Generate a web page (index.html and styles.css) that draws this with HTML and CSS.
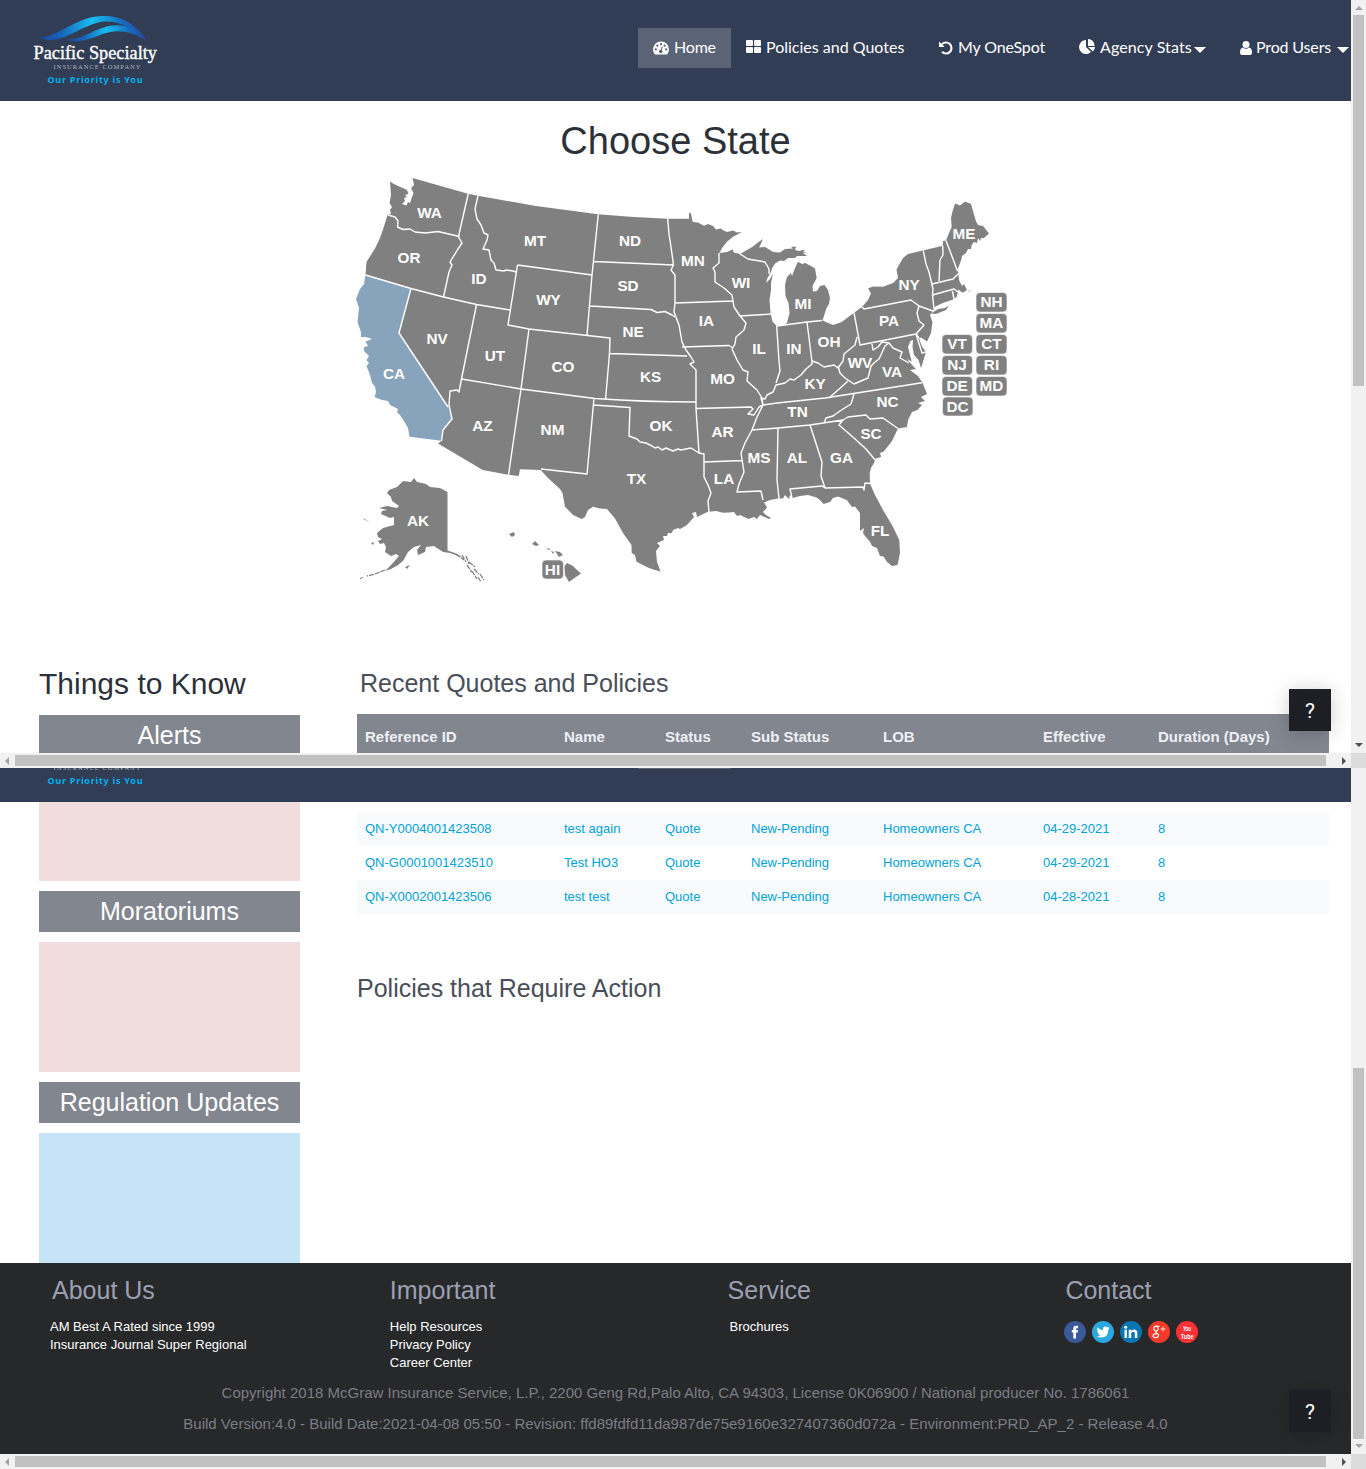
FILE: index.html
```html
<!DOCTYPE html>
<html lang="en">
<head>
<meta charset="utf-8">
<title>Pacific Specialty</title>
<link rel="stylesheet" href="styles.css">
</head>
<body>
<svg width="0" height="0" class="defs" aria-hidden="true">
  <defs>
    <linearGradient id="wave"><stop offset="0" stop-color="#1c439d"/><stop offset=".22" stop-color="#1763bb"/><stop offset=".5" stop-color="#18bdf0"/><stop offset=".78" stop-color="#176bbd"/><stop offset="1" stop-color="#2948a6"/></linearGradient>
    <symbol id="logo" viewBox="30 12 132 76">
      <path fill="url(#wave)" d="M37 37.500C56 39 75 17 101 16C124 15 137 26 147 41C134 29 121 21.500 106 21.500C84 22.500 67 42 47 39.700Q41 39 37 37.500Z"/>
      <path fill="url(#wave)" d="M66 39.500C83 41 97 25 118 25.200C134 26 140 33 147 41C136 34 127 31.300 117 31.300C100 31.300 86 46 66 39.500Z"/>
      <text x="33.500" y="59" textLength="123.500" lengthAdjust="spacingAndGlyphs" class="logo-name">Pacific Specialty</text>
      <text x="53.500" y="68.700" textLength="87" class="logo-sub">INSURANCE COMPANY</text>
      <text x="47.500" y="82.500" textLength="95" class="logo-tag">Our Priority is You</text>
    </symbol>
  </defs>
</svg>

<section class="frame frame-top">
  <div class="page">
    <header class="topbar">
      <svg class="logo" width="132" height="76"><use href="#logo"/></svg>
      <nav class="nav">
        <a class="item home active"><svg width="16" height="14" viewBox="0 0 17 14"><path fill="#fff" d="M2 14Q0 11 0 8.500A8.500 8.500 0 0 1 17 8.500Q17 11 15 14Z"/><g fill="#5b6477"><circle cx="3" cy="8.500" r="1.200"/><circle cx="4.600" cy="4.600" r="1.200"/><circle cx="8.500" cy="3" r="1.200"/><circle cx="12.400" cy="4.600" r="1.200"/><circle cx="14" cy="8.500" r="1.200"/><circle cx="8.200" cy="10.800" r="1.900"/></g><path stroke="#5b6477" stroke-width="1.100" d="M8.200 11L9.800 5.500"/></svg><span>Home</span></a>
        <a class="item policies"><svg width="15" height="13" viewBox="0 0 15 13"><g fill="#fff"><rect width="7" height="6" rx="1"/><rect x="8" width="7" height="6" rx="1"/><rect y="7" width="7" height="6" rx="1"/><rect x="8" y="7" width="7" height="6" rx="1"/></g></svg><span>Policies and Quotes</span></a>
        <a class="item onespot"><svg width="14" height="14" viewBox="0 0 14 14"><path fill="none" stroke="#fff" stroke-width="2.200" d="M3 3.200A5.500 5.500 0 1 1 3 10.800"/><path fill="#fff" d="M0 .5V6H5.700Z"/></svg><span>My OneSpot</span></a>
        <a class="item stats"><svg width="16" height="15" viewBox="0 0 16 15"><path fill="#fff" d="M7 1V8L12 13A7 7 0 1 1 7 1ZM9 0A6.500 6.500 0 0 1 15.500 7H9ZM9 8H16A7 7 0 0 1 14 12.500Z"/></svg><span>Agency Stats</span><i class="caret"></i></a>
        <a class="item users"><svg width="12" height="14" viewBox="0 0 12 14"><circle cx="6" cy="3.500" r="3.500" fill="#fff"/><path fill="#fff" d="M3 6.500Q6 9 9 6.500Q12 7 12 11.500Q12 14 10 14H2Q0 14 0 11.500Q0 7 3 6.500Z"/></svg><span>Prod Users</span><i class="caret"></i></a>
      </nav>
    </header>
    <h1>Choose State</h1>
    <svg class="map" width="670" height="420" viewBox="345 170 670 420">
      <path class="land" d="M390 181.500L394 184L398 186L403 188L407 190L408.500 194L405 195L407 197L404 198L405 201L402 204L406.500 205.500L408 202L410 203L412 197L413.500 193L411 188L414 185L412.500 178L468 193.700L478 195.700L536 206L598 214.300Q633 217.500 667.700 218.700H689V212.500L691 213.500L692.700 222L698 222.500L704 225.700L708 224L713 226L716 229.500L721 228.500L723.500 230.500L727 232L733 230.500L737 232.500L742 232L733 236.700L726.700 242L722 248L719.500 253L727 252L732.500 249.500L734 252.500L740 254L747 250L753 246.500L758 242.500L763 239L761 243.500L759 247.500L765 247L770 250L773 252L780 252.500L785 249L793 248.500L791 247L796 246.500L795 250L799 251L805 249.500L803 252L807 253L803 253L807 256L797 256L795 258L788 258L784 261L780 260.500L775 263.500L772.500 267.500L770 274L767.500 278L766 283L770 279L773 273.500L771 283L771 290L769.500 300L770.500 313L772.500 321.500L776.700 326H782L787 323L789.500 313L788.500 303L785.500 296L785 285L787 277L791 273L792 276L795 268L798 261.700L802 264L805 263L811 266L815 268.500L816.700 278L812.500 286L813 291.500L817 291L820 286L824.500 285L828 290L830 298L829 304L826.500 308L822.500 320.500L827 322.500L833 325L841.700 322L854 312.700L862 307L868 300L871 293.500L868 288.500L873 286.500L883 286.700L893 283L898 278L896.500 269.500L903 258L908 254L923 250.500L942.700 245.700L943 241L946 240.500L949 233L951.700 227L951 218L952.500 211.500L955 203.500L960 205.500L965 201.500L971 204L976 221.500L978 225L983 226L989 233.500L984 238L981 238L980 241L978 238L977 243L974 242L971.700 245L971 249L968 249L966 253L962 256L961.700 258.500L957.500 270L958.500 275L959 280L962 286L964 284L967 290L962.500 292.700L958.500 289.500L956.700 297L953 299.500L943.500 302.700L935 306.700L933 311L930 315L932.500 322L931 333L927 341.500L921 337.500L919 338.500L922 346.500L926 352L923.500 360L921 368L918.500 360L914 355L912.500 347L913 340L910.500 341L908 346.700L910 355L911.700 361.500L907 359L913 366L916 369L910 370L918 376L922.500 382.700L927 394L921 397L925 401L918 403L922 405L917.500 410L912 412L908 420L907 427L898 428.500L891.700 441.500L883.500 451.700L880 453L881 457L876 458.500L874 463L871 468L869.700 473L870 483.500L875 495L883 510L892 525L899.300 540L900 553L897.500 565L892 566L887 562L883.500 556.500L880 556L877 548L872 546L870 541.700L865 536L863 533L864 528L860 531L860 525L860 513L855 506.500L852 507L846.700 500L838 496.500L833 498L830 502L823.500 504L820 500L816.500 497.500L808 495L800 496L792.500 498L790 495L789 499L785 495L783 498.500L778 498.500L770 500L764 502.500L767 507.500L763 512L766 515L771 518L769 519L760 515L757 519L754 517L748.500 519L740 515L737 516L734 512L729 512.500L723 512.700L716 511L708 511.700L701 515L697 517L696 512L692 513L694 517L687 525L680 529L678 528L673 530L672 533L668 533L667 536L663 536L664 540L657 543L660 546L656 551L657 562L660.500 571.500L655 570L648.300 567.700L636.500 561.700L635 555L631.700 553L631.500 545L623 533L615 518.500L607 509L600 508.500L593 506.700L588 510L585 517L581.700 519L573 515L565 506.700L562.500 493L560 489L548 478L540.700 470L520 469.300L518.700 476L508 474.700L482.700 470L438 443.500L441.700 440.700L436 436L400 405L390 300L365.500 275L366.500 262L369 258L375 248.500L380 238L383.500 228L387.500 215L391 213.500L390 210L392 207L389.500 203L391 195Z"/>
      <path class="land selected" d="M365.500 275L411 288.500L399 333L448 406L452 419L443 430L441.500 440.700L409.500 436.700L408 428L404 421L400 415L397 412L398 409L390 405L388 401L382 400L374.500 397L376 392L375 386.500L372 383L370 375L366.500 366L369 363L366.500 360L369 356L364 351L364 347L368 346L365.500 341.500L372 339L366 337L361 337L361 332L357.500 322L359 308L356 299L360 289L364 284Z"/>
      <path class="land" d="M931 313.500L938 309L945 308L949 305.500L946 310L936 314ZM968 292L972 288.500L969 292Z"/>
      <path class="land" d="M447.500 492V550.500L455 553L462 557L458 556L450 553L443 552L434 546L426 547L425 552L418 555L417 550L421 545L414 547L408 552L403 561L398 565L391 569L385 571L392 564L399 556L396 554L391 556L385 552L386 547L384 543L380 544L378 541L382 539L378 537L377 533L383 528L394 525L394 517L390 518L381 514L382 511L387 510L379 508L387 506L397 508L399 506L392 501L391 497L387 493L389 490L397 487L403 481L411 482L414 478L417 482L426 484L430 487L440 488ZM405 567L410 565L407 569ZM371 543L374 542L373 545ZM363 518L366 520L365 520.500ZM366 520L370 522L367 521Z"/>
      <path class="islands" d="M385 570L375 574L367 576M363 577.500L360 578.500M456 554L464 560M462 555L466 562M466 556L469 564M469 562L475 567M467 565L472 572M474 569L479 574M472 571L477 579M480 574L484 580M478 577L481 582"/>
      <path class="land" d="M509 534L514 532L515 535L512 537ZM532 544L535 541L539 545L536 546ZM546 548L551 549L549 550ZM551 551L554 552L553 554ZM555 551L560 552L563 555L559 557ZM564.500 566L567 563L573 566L576 569L581 573.500L576 577L569 582L565 575Z"/>
      <path class="border" d="M388 215L395 217L398 221L397.500 227L403 229.500L410 229L415 232L425 233L438 231.500L459.500 236.500M468.300 193.500L459.500 232L458.500 237L462 243L458 249L450 262L452 265L449 272L443.500 297M365.500 275L411 288.500L443.500 297L476.500 304.500L510 310M478 195.700L475 209L477 219L481 225L484 233L488 235L487 240L483 249L489 250L491 260L494 263L496 270L504 271L506 270L513 271L516 272M517.500 265L592 275M598.300 214.300L592 275L587 335M517.500 265L508 325L529 329L610 338L609.500 353L605.500 400M594 261.500L674 265M590 306L651 309.500L657 312.500L665 311.500L672 315L675 317M667.700 218.700L669 234L671 247L673.500 265L671 270L675 275V303L674 312L679 325L682 342L686 350L691 357L694 362L690 364L696 370V402M675 303L733 301M733 301L732 295L724 288L715 282V272L713 268L719 263L719 253M740 254L748 259L765 262L769 269L769 274M733 301L734 307L740 316L746 323L744 330L736 337L735 344L732 349L737 360L743 370L748 372L747 381L757 390L762 398L763 405M740 316L772.500 314M682 347L729 345.500L733 348M609.500 353.500L687 356M411 288.500L399 333L448 407M476.500 304.500L461.500 379L459 392L457 390L450 391L449 405L452 419L443 430L441.500 441M461.500 379L521 389L595 398.500Q645 402 696 402M529 329L521 389L508.500 475M594 398L587 474L541 469M593.500 405L630 407.500L629 436L637 439L640 442L646 443L652 446L655 448L658 447L662 450L666 448L673 451L678 449L681 450L691 448L699 453M696 402V408.500L699 453L704 454V477L708 485L711 493L708 501L709 512M696 408.500L751 407L753 409L748 414L754 415L759 407L763 405M704 462L742 460.500M763 405L761 398L765 399L767 395L773 392L776 385L785 383L790 379L794 380L801 375L806 369L812 364L812 361L818 363L824 367L834 365L838 368L843 361L844 354L855 345L857 337M763 405L777 403L825 398L922 382.700M777 403L763 405L757 417L752 430L745 443L741 453L744 472L739 484L737 492L761 491L763 500M752 430L778 428L810 425L843 420L848 417L866 415L870 419L883 418L898 428.500M776.700 326L779 361L780 371L776 383M776.700 326L807 322L822 320.500M807 322L812 362M854 312.700L860 345L916 334M862 307L864 309L911 300L919 306L917 313L919 321L924 325L916 334L919 338M838 366L840 373L845 378L854 384L861 381L868 378L871 366L875 362L879 359L885 346L889 343L882 342L878 347L873 350L872 344M889 343L893 348L902 352L900 358L909 363M916 334L922 353L926 352M848 381L838 390L829 398M854 394L851 404L840 411L833 416L826 418L824 423M778 428L777 480L779 498.500M810 425L822 462L821 476L825 488L863 487L864 490L865 483L870 483.500M825 488L822 486L790 489L792 498M843 420L839 425L854 438L866 449L876 461M923.300 250.500L926 264L929 272L933 289L932.500 295L934 309M942.700 245.700L943 255L940 260L939 281M932 284L953 279L958 274M946 240.500L957.500 271M932.500 295L954 289L958 292M952 289L954 299M919 306L933 311"/>
      <g class="chip"><rect x="976" y="292.500" width="31" height="19.500" rx="4"/><rect x="976" y="313.500" width="31" height="19.500" rx="4"/><rect x="976" y="334.500" width="31" height="19.500" rx="4"/><rect x="976" y="355.500" width="31" height="19.500" rx="4"/><rect x="976" y="376.500" width="31" height="19.500" rx="4"/><rect x="942" y="334.500" width="30.500" height="19.500" rx="4"/><rect x="942" y="355.500" width="30.500" height="19.500" rx="4"/><rect x="942" y="376.500" width="30.500" height="19.500" rx="4"/><rect x="942.500" y="397" width="30.500" height="19" rx="4"/><rect x="542" y="560" width="21.500" height="19" rx="4"/></g>
      <g class="label">
        <text x="429.500" y="218">WA</text><text x="409" y="263">OR</text><text x="394" y="379">CA</text><text x="437" y="344">NV</text><text x="479" y="284">ID</text><text x="535" y="246">MT</text><text x="548.500" y="305">WY</text><text x="495" y="361">UT</text><text x="563" y="372">CO</text><text x="482.500" y="431">AZ</text><text x="552.500" y="435">NM</text><text x="630" y="246">ND</text><text x="628" y="291">SD</text><text x="633" y="337">NE</text><text x="650.500" y="382">KS</text><text x="661" y="431">OK</text><text x="636.500" y="484">TX</text><text x="693" y="266">MN</text><text x="706.500" y="326">IA</text><text x="722.500" y="384">MO</text><text x="722.500" y="437">AR</text><text x="724" y="484">LA</text><text x="741" y="288">WI</text><text x="759" y="354">IL</text><text x="794" y="354">IN</text><text x="803" y="309">MI</text><text x="829" y="347">OH</text><text x="815" y="389">KY</text><text x="797.500" y="417">TN</text><text x="759" y="463">MS</text><text x="797" y="463">AL</text><text x="841.500" y="463">GA</text><text x="880" y="536">FL</text><text x="871" y="439">SC</text><text x="887.500" y="407">NC</text><text x="892" y="377">VA</text><text x="860" y="368">WV</text><text x="889" y="326">PA</text><text x="909" y="290">NY</text><text x="964" y="239">ME</text><text x="418" y="526">AK</text><text x="552.500" y="575">HI</text><text x="991.500" y="307">NH</text><text x="991.500" y="328">MA</text><text x="991.500" y="349">CT</text><text x="991.500" y="370">RI</text><text x="991.500" y="391">MD</text><text x="957" y="349">VT</text><text x="957" y="370">NJ</text><text x="957" y="391">DE</text><text x="957.500" y="412">DC</text>
      </g>
    </svg>
    <div class="columns upper">
      <aside class="side"><h2>Things to Know</h2><h3 class="bar">Alerts</h3></aside>
      <main class="content"><h3 class="recent">Recent Quotes and Policies</h3>
        <div class="row head"><span>Reference ID</span><span>Name</span><span>Status</span><span>Sub Status</span><span>LOB</span><span>Effective</span><span>Duration (Days)</span></div>
      </main>
    </div>
    <button class="help">?</button>
  </div>
  <div class="vscroll"><i class="up dim"></i><b></b><i class="down"></i></div>
  <div class="hscroll"><i class="left dim"></i><b></b><i class="right"></i></div>
  <div class="corner"></div>
</section>

<section class="frame frame-bottom">
  <div class="page">
    <header class="topbar clipped"><svg class="logo" width="132" height="76"><use href="#logo"/></svg><div class="tab-edge"></div></header>
    <div class="columns lower">
      <aside class="side"><div class="note red short"></div><h3 class="bar">Moratoriums</h3><div class="note red"></div><h3 class="bar">Regulation Updates</h3><div class="note blue"></div></aside>
      <main class="content">
        <div class="row shade"><a>QN-Y0004001423508</a><a>test again</a><a>Quote</a><a>New-Pending</a><a>Homeowners CA</a><a>04-29-2021</a><a>8</a></div>
        <div class="row"><a>QN-G0001001423510</a><a>Test HO3</a><a>Quote</a><a>New-Pending</a><a>Homeowners CA</a><a>04-29-2021</a><a>8</a></div>
        <div class="row shade"><a>QN-X0002001423506</a><a>test test</a><a>Quote</a><a>New-Pending</a><a>Homeowners CA</a><a>04-28-2021</a><a>8</a></div>
        <h3 class="action">Policies that Require Action</h3>
      </main>
    </div>
    <footer class="footer">
      <div class="foot-cols">
        <div class="about"><h3>About Us</h3><a>AM Best A Rated since 1999</a><a>Insurance Journal Super Regional</a></div>
        <div><h3>Important</h3><a>Help Resources</a><a>Privacy Policy</a><a>Career Center</a></div>
        <div class="service"><h3>Service</h3><a>Brochures</a></div>
        <div><h3>Contact</h3>
          <div class="social">
            <svg viewBox="0 0 22 22"><circle cx="11" cy="11" r="11" fill="#3b5998"/><path fill="#fff" d="M9.300 17.500V11.500H7.800V9H9.300V7.500Q9.300 4.700 12 4.700H14V7.200H12.800Q12 7.200 12 8V9H14L13.700 11.500H12V17.500Z"/></svg>
            <svg viewBox="0 0 22 22"><circle cx="11" cy="11" r="11" fill="#2ca8e0"/><path fill="#fff" d="M5.500 6.500Q8 9 11 9Q10.700 5.600 13.500 5.600Q14.800 5.600 15.500 6.500L17.300 5.900L16.500 7.400L17.600 7.200L16.300 8.700Q16.200 16.500 9 16.500Q6.500 16.500 4.700 15.300Q7 15.300 8.300 14.200Q6.300 13.800 6 12.300H7Q5 11.500 5 9.500L6 9.800Q4.500 8.300 5.500 6.500Z"/></svg>
            <svg viewBox="0 0 22 22"><circle cx="11" cy="11" r="11" fill="#0976b4"/><path fill="#fff" d="M4.500 8.800H7V17H4.500ZM8.700 8.800H11.100V10Q12 8.500 14 8.500Q17.300 8.500 17.300 12V17H14.800V12.500Q14.800 10.800 13.200 10.800Q11.200 10.800 11.200 13V17H8.700Z"/><circle cx="5.700" cy="6.300" r="1.500" fill="#fff"/></svg>
            <svg viewBox="0 0 22 22"><circle cx="11" cy="11" r="11" fill="#f43b2a"/><g fill="none" stroke="#fff" stroke-width="1.100"><ellipse cx="8" cy="7.600" rx="2.100" ry="2.500"/><path d="M8 5.200H11.500M9 10Q7 11 8.500 12Q11 13 10.500 14.800Q10 16.700 7.600 16.700Q5 16.700 5 14.800Q5 12.800 8.800 12.600"/><path stroke-width=".8" d="M12.500 8H17.500M15 5.500V10.500"/></g></svg>
            <svg viewBox="0 0 22 22"><circle cx="11" cy="11" r="11" fill="#fc3134"/><text x="7" y="10.300" textLength="8" lengthAdjust="spacingAndGlyphs" class="yt">You</text><text x="4.800" y="17.700" textLength="12.800" lengthAdjust="spacingAndGlyphs" class="yt">Tube</text></svg>
          </div>
        </div>
      </div>
      <p>Copyright 2018 McGraw Insurance Service, L.P., 2200 Geng Rd,Palo Alto, CA 94303, License 0K06900 / National producer No. 1786061</p>
      <p>Build Version:4.0 - Build Date:2021-04-08 05:50 - Revision: ffd89fdfd11da987de75e9160e327407360d072a - Environment:PRD_AP_2 - Release 4.0</p>
    </footer>
    <button class="help">?</button>
  </div>
  <div class="vscroll"><b></b><i class="down dim"></i></div>
  <div class="hscroll"><i class="left dim"></i><b></b><i class="right"></i></div>
  <div class="corner"></div>
</section>
</body>
</html>
```
FILE: styles.css
```css
* { box-sizing: border-box; }
body { margin: 0; width: 1366px; height: 1469px; overflow: hidden; background: #fff; font-family: "Liberation Sans", Arial, sans-serif; }
h1, h2, h3, p { margin: 0; font-weight: 400; }
.defs { position: absolute; }
.frame { display: grid; grid-template-columns: 1351px 15px; }
.frame-top { grid-template-rows: 753px 15px; }
.frame-bottom { grid-template-rows: 686px 15px; }
.page { position: relative; overflow: hidden; min-height: 0; }

.topbar { display: flex; height: 101px; padding: 12px 0 0 30px; background: #313d54; }
.logo { flex: none; }
.logo-name { font: 19px "Liberation Serif", serif; fill: #fff; stroke: #fff; stroke-width: .35px; }
.logo-sub { font: 6.500px "Liberation Serif", serif; fill: #aeb3bd; }
.logo-tag { font: bold 9px "Noto Sans", sans-serif; fill: #00aeef; }
.nav { display: flex; margin: 16px 0 0 476px; height: 40px; }
.item { display: flex; align-items: center; flex: none; gap: 5px; height: 40px; padding: 0 0 0 15px; color: #fff; font: 16px Lato, sans-serif; white-space: nowrap; }
.item svg { flex: none; }
.item span { margin-top: -3px; }
.active { background: #5b6477; }
.home { width: 93px; }
.home span { letter-spacing: -.2px; }
.policies { width: 193px; }
.onespot { width: 140px; }
.onespot span { letter-spacing: -.15px; }
.stats { width: 161px; }
.stats span { letter-spacing: .1px; }
.users { width: 125px; gap: 4px; }
.users span { letter-spacing: -.15px; }
.policies svg, .stats svg { margin-top: -3px; }
.caret { border: solid transparent; border-width: 6px 6px 0; border-top-color: #fff; margin: 3px 0 0 -3px; }
.users .caret { margin-left: 2px; }

h1 { margin-top: 20px; line-height: 40px; font-size: 38px; color: #2c3038; text-align: center; }
.map { display: block; margin: 9px 0 0 345px; }
.land { fill: #808080; }
.selected { fill: #88a4bd; }
.islands { fill: none; stroke: #808080; stroke-width: 1.300px; stroke-dasharray: 5 1; }
.border { fill: none; stroke: #fff; stroke-width: 1.400px; stroke-linejoin: round; }
.chip rect { fill: #808080; stroke: #fff; stroke-width: .6px; }
.label { font-size: 15.300px; font-weight: 700; fill: #fff; text-anchor: middle; }

.columns { display: grid; grid-template-columns: 261px 972px; column-gap: 57px; padding-left: 39px; }
.upper { padding-top: 73px; }
.side h2 { margin: 1px 0 11px; font-size: 30px; line-height: 40px; color: #2c3038; }
.bar { height: 41px; line-height: 41px; font-size: 25px; text-align: center; color: #fff; background: #82868f; }
.recent, .action { font-size: 25px; line-height: 40px; color: #494e59; }
.recent { margin: 0 0 11px 3px; }
.row { display: grid; grid-template-columns: 199px 101px 86px 132px 160px 115px 1fr; height: 34px; padding-left: 8px; font-size: 13px; line-height: 34px; color: #00a3d9; }
.shade { background: #f9fafc; }
.head { height: 46px; line-height: 46px; font-size: 15px; font-weight: 700; color: #eef0f6; background: #82868f; }

.clipped { height: 34px; padding-top: 0; align-items: flex-end; overflow: hidden; }
.clipped .logo { margin-bottom: 13px; }
.tab-edge { align-self: flex-start; width: 93px; height: 1px; margin-left: 476px; background: #5b6477; }
.lower { height: 461px; }
.lower .content { padding-top: 10px; }
.note { height: 130px; margin: 10px 0; background: #f1dddc; }
.short { height: 79px; margin-top: 0; }
.blue { background: #c5e4f5; margin-bottom: 0; }
.action { margin-top: 54px; }

.footer { height: 191px; padding-top: 7px; background: #27282a; }
.foot-cols { display: grid; grid-template-columns: repeat(4, 337.800px); height: 107px; padding-left: 52px; }
.foot-cols h3 { font-size: 25px; line-height: 40px; margin-bottom: 8px; color: #9ba0b1; }
.foot-cols a { display: block; color: #fff; font-size: 13px; line-height: 18px; }
.about a { margin-left: -2px; }
.service a { margin-left: 2px; }
.footer p { font-size: 15px; line-height: 31px; text-align: center; color: #7b7d86; }
.social { display: flex; gap: 5.800px; margin: 11px 0 0 -1px; }
.social svg { width: 22px; height: 22px; }
.yt { font: bold 8px "Liberation Sans", sans-serif; fill: #fff; }

.help { position: absolute; right: 20px; bottom: 22px; width: 42px; height: 42px; padding: 2px 0 0; border: 0; background: #1d1f24; color: #fff; font: 400 21px/40px Roboto, sans-serif; box-shadow: 0 2px 20px rgba(0,0,0,.2); }

.vscroll, .hscroll { display: flex; align-items: center; background: #f1f1f1; }
.vscroll { flex-direction: column; }
.vscroll b { width: 11px; height: 371px; background: #c1c1c1; }
.frame-bottom .vscroll { padding-top: 300px; }
.hscroll b { width: 1311px; height: 11px; margin-left: 6px; background: #c1c1c1; }
.vscroll i, .hscroll i { width: 0; height: 0; border: 4px solid transparent; --arrow: #505050; }
.vscroll .dim, .hscroll .dim { --arrow: #a3a3a3; }
.vscroll .up { border-width: 0 4px 4px; border-bottom-color: var(--arrow); margin: 6px 0 5px; }
.vscroll .down { border-width: 4px 4px 0; border-top-color: var(--arrow); margin: auto 0 6px; }
.frame-bottom .down { margin-top: 5px; }
.hscroll .left { border-width: 4px 4px 4px 0; border-right-color: var(--arrow); margin-left: 5px; }
.hscroll .right { border-width: 4px 0 4px 4px; border-left-color: var(--arrow); margin: 0 5px 0 auto; }
.corner { background: #dcdcdc; }
```
